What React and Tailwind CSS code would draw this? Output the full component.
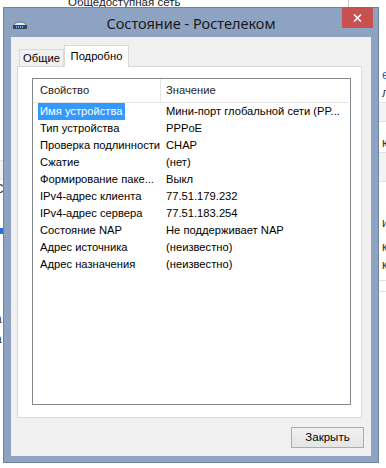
import React from 'react'

const rows = [
  ['Имя устройства', 'Мини-порт глобальной сети (PP...'],
  ['Тип устройства', 'PPPoE'],
  ['Проверка подлинности', 'CHAP'],
  ['Сжатие', '(нет)'],
  ['Формирование паке...', 'Выкл'],
  ['IPv4-адрес клиента', '77.51.179.232'],
  ['IPv4-адрес сервера', '77.51.183.254'],
  ['Состояние NAP', 'Не поддерживает NAP'],
  ['Адрес источника', '(неизвестно)'],
  ['Адрес назначения', '(неизвестно)'],
]

function ConnIcon() {
  return (
    <svg width="14" height="8" viewBox="0 0 14 8">
      <path d="M1 5 Q1 1 7 1 Q13 1 13 5 Z" fill="#e4e6ea" stroke="#6b7380" strokeWidth="1" />
      <rect x="0.5" y="4.5" width="13" height="3" fill="#3c4450" stroke="#3c4450" />
      <rect x="3" y="5" width="1" height="2" fill="#5fb0ff" />
      <rect x="5" y="5" width="1" height="2" fill="#5fb0ff" />
      <rect x="7" y="5" width="1" height="2" fill="#5fb0ff" />
      <rect x="9" y="5" width="1" height="2" fill="#5fb0ff" />
    </svg>
  )
}

export default function App() {
  return (
    <div
      className="relative w-[386px] h-[468px] bg-white overflow-hidden text-[11.2px] text-black"
      style={{ fontFamily: '"Liberation Sans", Arial, sans-serif' }}
    >
      {/* window behind the dialog */}
      <div className="absolute left-[68px] top-[-6px] text-[11.5px] text-[#1e1e1e] whitespace-nowrap">Общедоступная сеть</div>
      <div className="absolute left-[348px] top-0 w-px h-[8px] bg-[#c8c8c8]" />
      <div className="absolute left-[379px] top-[66px] w-[12px] flex flex-col text-[12px] text-[#333] leading-[18px] overflow-hidden">
        <div className="pl-[3px] text-[#1f5fbf]">ет</div>
        <div className="pl-[3px]">ли</div>
        <div className="h-[20px] bg-[#f3f3f3] border-y border-[#e2e2e2]" />
        <div className="pl-[3px] mt-[12px]">ю</div>
        <div className="h-[30px] bg-[#f3f3f3] border-y border-[#e2e2e2]" />
        <div className="pl-[3px] mt-[32px]">и</div>
        <div className="pl-[3px] mt-[6px]">к</div>
        <div className="pl-[3px]">к</div>
        <div className="h-[12px] border-y border-[#e2e2e2] mt-[6px]" />
      </div>
      <div className="absolute left-0 top-[160px] w-[3px] flex flex-col text-[12px] text-[#333] leading-[18px] overflow-hidden">
        <div className="h-[20px] bg-[#f3f3f3] border-y border-[#e2e2e2]" />
        <div className="-ml-[5px]">С</div>
        <div className="h-[6px] bg-[#2d6fd6] mt-[30px]" />
        <div className="-ml-[5px] mt-[76px]">а</div>
        <div className="-ml-[5px] mt-[2px]">а</div>
      </div>

      {/* dialog */}
      <div className="absolute left-[3px] top-[7px] w-[376px] h-[456px] bg-[#8da3c1] border border-[#6d83a2] flex flex-col">
        <div className="relative h-[29px] flex items-center justify-center">
          <div className="absolute left-[9px] top-[13px]">
            <ConnIcon />
          </div>
          <span className="text-[14.5px] text-[#1a1a1a] leading-none mt-[1px]" style={{ fontFamily: '"Noto Sans", sans-serif' }}>
            Состояние - Ростелеком
          </span>
          <div className="absolute right-[5px] top-[-1px] w-[31px] h-[21px] bg-[#c75050] flex items-center justify-center">
            <svg width="9" height="8" viewBox="0 0 9 8">
              <path d="M1 0.5 L8 7.5 M8 0.5 L1 7.5" stroke="#fff" strokeWidth="1.6" />
            </svg>
          </div>
        </div>

        <div className="flex-1 mx-[7px] mb-[6px] bg-[#f0f0f0] flex flex-col pl-[6px] pr-[9px] pt-[8px] pb-[8px]">
          {/* tabs */}
          <div className="flex items-end h-[21px] pl-[2px]">
            <div className="w-[45px] h-[17px] bg-[#f0f0f0] border border-b-0 border-[#d9d9d9] flex items-center justify-center">Общие</div>
            <div className="relative w-[65px] h-[22px] bg-white border border-b-0 border-[#d9d9d9] flex items-start justify-center pt-[2px] z-10 -mb-px">
              Подробно
            </div>
          </div>

          {/* tab panel */}
          <div className="h-[352px] bg-white border border-[#d9d9d9] pt-[11px] pl-[14px] pr-[10px] pb-[12px] flex flex-col">
            <div className="flex-1 border border-[#828790] bg-white">
              <div className="flex h-[24px] items-center text-[#1e1e1e] mr-[1px]">
                <div className="w-[128px] h-full pl-[7px] flex items-center border-r border-b border-[#e5e5e5]">Свойство</div>
                <div className="flex-1 h-full pl-[5px] flex items-center border-b border-[#e5e5e5]">Значение</div>
              </div>
              {rows.map(([k, v], i) => (
                <div key={k} className="flex h-[17px] items-center leading-[17px] whitespace-nowrap">
                  <div className="w-[128px] pl-[5px] overflow-hidden">
                    <span className={i === 0 ? 'bg-[#3399ff] text-white px-[2px] inline-block' : 'px-[2px] inline-block'}>{k}</span>
                  </div>
                  <div className="flex-1 pl-[5px] overflow-hidden">{v}</div>
                </div>
              ))}
            </div>
          </div>

          {/* footer */}
          <div className="flex justify-end mt-[9px] -mr-[2px]">
            <button className="w-[73px] h-[21px] border border-[#acacac] bg-gradient-to-b from-[#f0f0f0] to-[#e5e5e5] text-[11.5px] leading-none">
              Закрыть
            </button>
          </div>
        </div>
      </div>
    </div>
  )
}
